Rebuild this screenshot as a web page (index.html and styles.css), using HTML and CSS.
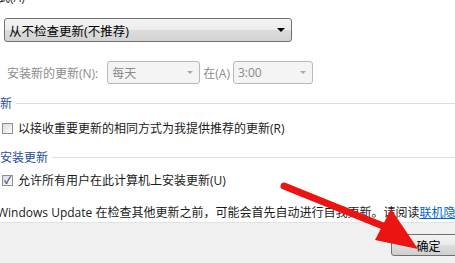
FILE: index.html
```html
<!DOCTYPE html>
<html lang="zh-CN">
  <head>
    <meta charset="UTF-8" />
    <title>更改设置</title>
    <link rel="stylesheet" href="styles.css">
  </head>
  <body>
    <div class="page">
      <div class="cut-label">式(A)</div>
      <div class="combo main">
        <span>从不检查更新(不推荐)</span>
        <span class="caret"></span>
      </div>
      <div class="install-row">
        <span class="dim">安装新的更新(N):</span>
        <div class="combo off day"><span>每天</span><span class="caret"></span></div>
        <span class="dim at">在(A)</span>
        <div class="combo off time"><span>3:00</span><span class="caret"></span></div>
      </div>
      <div class="group first"><span>新</span><i></i></div>
      <label class="check first"><span class="box"></span>以接收重要更新的相同方式为我提供推荐的更新(R)</label>
      <div class="group second"><span>安装更新</span><i></i></div>
      <label class="check second"><span class="box on">✓</span>允许所有用户在此计算机上安装更新(U)</label>
      <p class="note">Windows Update 在检查其他更新之前，可能会首先自动进行自我更新。请阅读<a href="#">联机隐私声明</a></p>
    </div>
    <div class="footer">
      <button class="ok">确定</button>
    </div>
    <svg class="mark" width="455" height="263" viewBox="0 0 455 263">
      <line x1="284" y1="186" x2="388" y2="228" stroke="#ec1313" stroke-width="7" stroke-linecap="round" />
      <polygon points="418,249 375,240 391,209" fill="#ec1313" />
    </svg>
  </body>
</html>
```

FILE: styles.css
```css
body {
  margin: 0;
  background: #ffffff;
  font-family: "Open Sans", "Noto Sans CJK SC", sans-serif;
  font-size: 12px;
  color: #1a1a1a;
  overflow: hidden;
  position: relative;
  width: 455px;
  height: 263px;
}
.page {
  padding-left: 4px;
  height: 222px;
  display: flex;
  flex-direction: column;
}
.cut-label {
  margin-top: -9px;
  height: 15px;
  line-height: 14px;
  margin-left: -6px;
  color: #333;
}
.combo {
  display: flex;
  align-items: center;
  justify-content: space-between;
  box-sizing: border-box;
  border: 1px solid #707070;
  border-radius: 3px;
  padding: 0 6px 0 4px;
}
.combo.main {
  margin-top: 12px;
  width: 288px;
  height: 24px;
  background: linear-gradient(#f3f3f3, #ececec 50%, #dcdcdc 51%, #d3d3d3);
  color: #000;
  font-size: 12.5px;
}
.caret {
  width: 0;
  height: 0;
  border-left: 4px solid transparent;
  border-right: 4px solid transparent;
  border-top: 4px solid #000;
}
.install-row {
  margin-top: 19px;
  height: 23px;
  display: flex;
  align-items: center;
}
.dim {
  color: #8c8c8c;
  margin-left: 3px;
}
.dim.at {
  margin-left: 3px;
  margin-right: 3px;
}
.combo.off {
  height: 23px;
  border-color: #b5b9bb;
  background: #f4f4f4;
  color: #8a8a8a;
}
.combo.off .caret {
  border-top-color: #a8a8a8;
  border-left-width: 3px;
  border-right-width: 3px;
  border-top-width: 3px;
}
.combo.day {
  margin-left: 9px;
  width: 93px;
}
.combo.time {
  width: 80px;
}
.group {
  display: flex;
  align-items: center;
  height: 14px;
  margin-left: -4px;
  color: #2a4ea0;
}
.group i {
  flex: 1;
  height: 1px;
  background: #d9dfe3;
  margin-left: 4px;
}
.group.first {
  margin-top: 12px;
}
.group.second {
  margin-top: 14px;
}
.check {
  display: flex;
  align-items: center;
  height: 16px;
  margin-left: -2px;
}
.check.first {
  margin-top: 10px;
}
.check.second {
  margin-top: 8px;
}
.box {
  width: 11px;
  height: 11px;
  box-sizing: border-box;
  border: 1px solid #8f8f8f;
  background: linear-gradient(135deg, #dcdcdc, #fbfbfb);
  margin-right: 5px;
  display: flex;
  align-items: center;
  justify-content: center;
  font-size: 10px;
  line-height: 10px;
  color: #3b4f8f;
  font-weight: bold;
}
.note {
  margin: 17px 0 0 -7px;
  height: 16px;
  line-height: 16px;
  white-space: nowrap;
}
.note a {
  color: #0066cc;
}
.footer {
  height: 41px;
  background: #f0f0f0;
  border-top: 1px solid #e2e2e2;
  box-sizing: border-box;
  padding: 11px 0 0 391px;
}
.ok {
  width: 75px;
  height: 22px;
  border: 1px solid #707070;
  border-radius: 3px;
  background: linear-gradient(#f2f2f2, #ebebeb 50%, #dddddd 51%, #cfcfcf);
  font-family: "Noto Sans CJK SC", sans-serif;
  font-size: 12px;
  color: #000;
  padding: 0;
}
.mark {
  position: absolute;
  left: 0;
  top: 0;
}
```
